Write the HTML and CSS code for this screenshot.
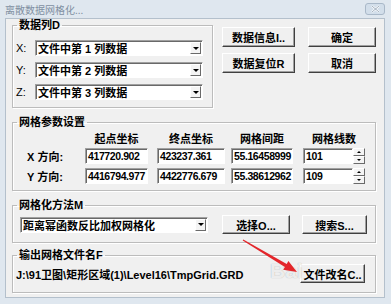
FILE: index.html
```html
<!DOCTYPE html>
<html lang="zh-CN">
<head>
    <meta charset="UTF-8">
    <title>离散数据网格化</title>
    <link rel="stylesheet" href="styles.css">
</head>
<body>
    <div class="window">
        <div class="titlebar">
            <span class="title">离散数据网格化...</span>
            <span class="close">
                <svg width="9" height="8" viewBox="0 0 9 8"><path d="M1 1 L8 7 M8 1 L1 7" stroke="#fff" stroke-width="2"/><path d="M1 1 L8 7 M8 1 L1 7" stroke="#8798ab" stroke-width="0.8"/></svg>
            </span>
        </div>
        <div class="client">
            <div class="top">
                <fieldset class="group data-cols">
                    <legend>数据列D</legend>
                    <div class="col-row"><span class="axis">X:</span><div class="combo"><span>文件中第 1 列数据</span><i class="drop"></i></div></div>
                    <div class="col-row"><span class="axis">Y:</span><div class="combo"><span>文件中第 2 列数据</span><i class="drop"></i></div></div>
                    <div class="col-row"><span class="axis">Z:</span><div class="combo"><span>文件中第 3 列数据</span><i class="drop"></i></div></div>
                </fieldset>
                <div class="btn-grid">
                    <button class="btn">数据信息I..</button>
                    <button class="btn">确定</button>
                    <button class="btn">数据复位R</button>
                    <button class="btn">取消</button>
                </div>
            </div>

            <fieldset class="group grid-params">
                <legend>网格参数设置</legend>
                <div class="param-grid">
                    <span></span>
                    <span class="head w1">起点坐标</span>
                    <span class="head w2">终点坐标</span>
                    <span class="head w3">网格间距</span>
                    <span class="head w4">网格线数</span>

                    <span class="dir">X 方向:</span>
                    <div class="field w1">417720.902</div>
                    <div class="field w2">423237.361</div>
                    <div class="field w3">55.16458999</div>
                    <div class="spin-field w4"><div class="field">101</div><div class="spin"><i class="up"></i><i class="down"></i></div></div>

                    <span class="dir">Y 方向:</span>
                    <div class="field w1">4416794.977</div>
                    <div class="field w2">4422776.679</div>
                    <div class="field w3">55.38612962</div>
                    <div class="spin-field w4"><div class="field">109</div><div class="spin"><i class="up"></i><i class="down"></i></div></div>
                </div>
            </fieldset>

            <fieldset class="group method">
                <legend>网格化方法M</legend>
                <div class="method-row">
                    <div class="combo wide"><span>距离幂函数反比加权网格化</span><i class="drop"></i></div>
                    <button class="btn pick">选择O...</button>
                    <button class="btn search">搜索S...</button>
                </div>
            </fieldset>

            <fieldset class="group output">
                <legend>输出网格文件名F</legend>
                <div class="output-row">
                    <span class="path">J:\91卫图\矩形区域(1)\Level16\TmpGrid.GRD</span>
                    <button class="btn rename">文件改名C..</button>
                </div>
            </fieldset>
        </div>

        <span class="watermark">Bai</span>
        <svg class="arrow" width="391" height="304" viewBox="0 0 391 304">
            <polygon points="243.3,239.6 286.7,263.9 288.4,261.1 297,272 283.2,269.7 284.9,266.9 242.7,240.4" fill="#e3262b"/>
        </svg>
    </div>
</body>
</html>
```

FILE: styles.css
```css
*{box-sizing: border-box;}
body{margin: 0;font-family: "Liberation Sans","Noto Sans CJK SC",sans-serif;font-size: 11px;color: #000;}
.window{position: relative;width: 391px;height: 304px;background-color: #dfe7ef;display: flex;flex-direction: column;}
.titlebar{height: 18px;display: flex;align-items: center;justify-content: space-between;padding: 0 6px 0 5px;}
.title{font-family: "Noto Sans CJK SC",sans-serif;font-size: 10px;color: #8190a2;}
.close{width: 20px;height: 12px;border: 1px solid #a9b8c8;border-radius: 3px;background-color: #d2deea;display: flex;align-items: center;justify-content: center;}
.client{flex: 1;margin: 0 6px 6px 5px;background-color: #f0f0f0;border: 1px solid #b4c0cc;padding: 0 8px 0 6px;}

/* group boxes */
.group{margin: 0;padding: 0;min-width: 0;border: 1px solid #bcbcbc;box-shadow: inset 1px 1px #fff, 1px 1px #fff;}
.group legend{margin-left: 4px;padding: 0 2px;line-height: 12px;font-weight: bold;}

.top{display: flex;align-items: flex-start;}
.data-cols{width: 201px;height: 89px;padding-top: 9px;}
.col-row{display: flex;align-items: center;height: 16px;margin: 0 0 6px 3px;}
.axis{width: 19px;}

/* sunken fields */
.combo, .field{height: 16px;background-color: #fff;border: 1px solid;border-color: #a0a0a0 #fff #fff #a0a0a0;box-shadow: inset 1px 1px #696969;}
.combo{width: 168px;display: flex;align-items: center;justify-content: space-between;padding-left: 2px;font-weight: bold;white-space: nowrap;}
.combo.wide{width: 188px;}
.drop{display: flex;align-items: center;justify-content: center;width: 11px;height: 12px;margin-right: 1px;background-color: #f4f4f4;border: 1px solid;border-color: #fff #6a6a6a #6a6a6a #fff;}
.drop:after{content: "";border-left: 3px solid transparent;border-right: 3px solid transparent;border-top: 3px solid #000;}
.field{padding: 0 0 0 2px;line-height: 14px;font-size: 10.5px;letter-spacing: -0.4px;font-weight: bold;white-space: nowrap;overflow: hidden;}

/* raised buttons */
.btn{height: 20px;padding: 0;font: inherit;font-weight: bold;color: #000;background-color: #f0f0f0;border: 1px solid;border-color: #fff #404040 #404040 #fff;box-shadow: inset -1px -1px #a0a0a0;}
.btn-grid{display: grid;grid-template-columns: 73px 68px;grid-auto-rows: 20px;gap: 6px 13px;margin: 8px 0 0 9px;}

/* grid parameters */
.grid-params{height: 75px;margin-top: 8px;padding-top: 4px;}
.param-grid{display: grid;grid-template-columns: 58px 72px 74px 72px 62px;grid-template-rows: 12px 16px 16px;row-gap: 4px;margin-left: 14px;align-items: center;}
.head{font-weight: bold;text-align: center;}
.dir{font-weight: bold;}
.w1{width: 63px;}
.w2{width: 68px;}
.w3{width: 62px;}
.w4{width: 62px;}
.spin-field{display: flex;}
.spin-field .field{flex: 1;}
.spin{width: 12px;height: 16px;display: flex;flex-direction: column;}
.spin i{flex: 1;display: flex;align-items: center;justify-content: center;background-color: #f4f4f4;border: 1px solid;border-color: #fff #6a6a6a #6a6a6a #fff;}
.spin .up:after{content: "";border-left: 2px solid transparent;border-right: 2px solid transparent;border-bottom: 2px solid #000;}
.spin .down:after{content: "";border-left: 2px solid transparent;border-right: 2px solid transparent;border-top: 2px solid #000;}

/* method */
.method{height: 44px;margin-top: 8px;padding-top: 4px;}
.method-row{display: flex;align-items: center;height: 19px;margin-left: 7px;}
.method-row .btn{height: 19px;}
.pick{width: 68px;margin-left: 14px;}
.search{width: 65px;margin-left: 12px;}

/* output */
.output{height: 44px;margin-top: 6px;padding-top: 3px;}
.output-row{display: flex;align-items: center;justify-content: space-between;height: 19px;margin: 0 10px 0 3px;}
.path{font-weight: bold;}
.rename{width: 65px;height: 19px;}

.watermark{position: absolute;left: 270px;top: 259px;font-size: 21px;font-weight: bold;color: rgba(255,255,255,0.8);text-shadow: 0 0 1px rgba(0,0,0,0.3);}
.arrow{position: absolute;left: 0;top: 0;pointer-events: none;}
```
